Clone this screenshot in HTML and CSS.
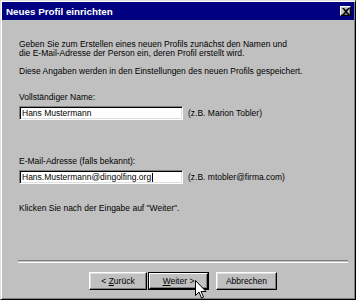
FILE: index.html
```html
<!DOCTYPE html>
<html lang="de">
<head>
<meta charset="utf-8">
<title>Neues Profil einrichten</title>
<link rel="stylesheet" href="styles.css">
</head>
<body>
<div class="window">
  <div class="titlebar">
    <span class="title">Neues Profil einrichten</span>
    <span class="close"><svg width="8" height="7" viewBox="0 0 8 7"><path d="M0 0h2l2 2 2-2h2L5 3.5 8 7H6L4 5 2 7H0l3-3.5z" fill="#000"/></svg></span>
  </div>
  <div class="content">
    <p class="intro">Geben Sie zum Erstellen eines neuen Profils zunächst den Namen und<br>die E-Mail-Adresse der Person ein, deren Profil erstellt wird.</p>
    <p class="info">Diese Angaben werden in den Einstellungen des neuen Profils gespeichert.</p>
    <p class="label first">Vollständiger Name:</p>
    <div class="field-row">
      <div class="input">Hans Mustermann</div>
      <span class="hint">(z.B. Marion Tobler)</span>
    </div>
    <p class="label second">E-Mail-Adresse (falls bekannt):</p>
    <div class="field-row">
      <div class="input">Hans.Mustermann@dingolfing.org<span class="caret"></span></div>
      <span class="hint">(z.B. mtobler@firma.com)</span>
    </div>
    <p class="info next">Klicken Sie nach der Eingabe auf "Weiter".</p>
    <div class="separator"></div>
    <div class="buttons">
      <div class="btn"><span>&lt; <u>Z</u>urück</span></div>
      <div class="btn default"><span class="inner"><span><u>W</u>eiter &gt;</span></span></div>
      <div class="btn cancel"><span>Abbrechen</span></div>
    </div>
  </div>
  <svg class="cursor" width="12" height="19" viewBox="0 0 12 19"><path d="M0.5 0.5v15l3.5-3.5 2.5 6 2-1-2.5-5.5h5z" fill="#fff" stroke="#000" stroke-width="1"/></svg>
</div>
</body>
</html>
```
FILE: styles.css
```css
html, body {
  margin: 0;
  padding: 0;
  background: #fff;
}
.window {
  position: relative;
  width: 356px;
  height: 300px;
  box-sizing: border-box;
  background: #c0c0c0;
  border: 1px solid;
  border-color: #dfdfdf #000 #000 #dfdfdf;
  box-shadow: inset 1px 1px #fff, inset -1px -1px #808080;
  padding: 1px;
  font-family: "Liberation Sans", Arial, sans-serif;
  font-size: 8.5px;
  color: #000;
}
.titlebar {
  height: 18px;
  background: #000080;
  display: flex;
  align-items: center;
  justify-content: space-between;
  padding: 0 3px 0 4px;
}
.title {
  color: #fff;
  font-weight: bold;
  font-size: 9.8px;
}
.close {
  width: 11px;
  height: 10px;
  box-sizing: border-box;
  background: #c0c0c0;
  border: 1px solid;
  border-color: #fff #000 #000 #fff;
  box-shadow: inset -1px -1px #808080;
  display: flex;
  align-items: center;
  justify-content: center;
}
.content {
  padding: 20px 0 0 17px;
}
p {
  margin: 0;
  line-height: 9px;
}
.info { margin-top: 9px; }
.label.first { margin-top: 17px; }
.label.second { margin-top: 37px; }
.info.next { margin-top: 20px; }
.field-row {
  display: flex;
  align-items: center;
  gap: 5px;
  margin-top: 4px;
}
.input {
  width: 164px;
  height: 14px;
  box-sizing: border-box;
  background: #fff;
  border: 1px solid;
  border-color: #808080 #fff #fff #808080;
  box-shadow: inset 1px 1px #000, inset -1px -1px #dfdfdf;
  padding: 0 2px;
  line-height: 12px;
  white-space: nowrap;
  display: flex;
  align-items: center;
}
.caret {
  display: inline-block;
  width: 1px;
  height: 9px;
  background: #000;
  margin-left: 1px;
}
.separator {
  margin: 47px 0 0 -1px;
  width: 330px;
  height: 1px;
  border-top: 1px solid #808080;
  border-bottom: 1px solid #fff;
}
.buttons {
  display: flex;
  margin: 9px 0 0 70px;
}
.btn {
  width: 58px;
  height: 18px;
  box-sizing: border-box;
  border: 1px solid;
  border-color: #fff #000 #000 #fff;
  box-shadow: inset -1px -1px #808080, inset 1px 1px #dfdfdf;
  display: flex;
  align-items: center;
  justify-content: center;
  line-height: 10px;
  white-space: pre;
}
.btn.default {
  width: 61px;
  margin-left: 1px;
  border: 1px solid #000;
  box-shadow: none;
  padding: 0;
}
.btn.default .inner {
  flex: 1;
  align-self: stretch;
  display: flex;
  align-items: center;
  justify-content: center;
  border: 1px solid;
  border-color: #fff #000 #000 #fff;
  box-shadow: inset -1px -1px #808080;
}
.btn.cancel {
  margin-left: 7px;
  width: 61px;
}
.cursor {
  position: absolute;
  left: 194px;
  top: 279px;
}
```
